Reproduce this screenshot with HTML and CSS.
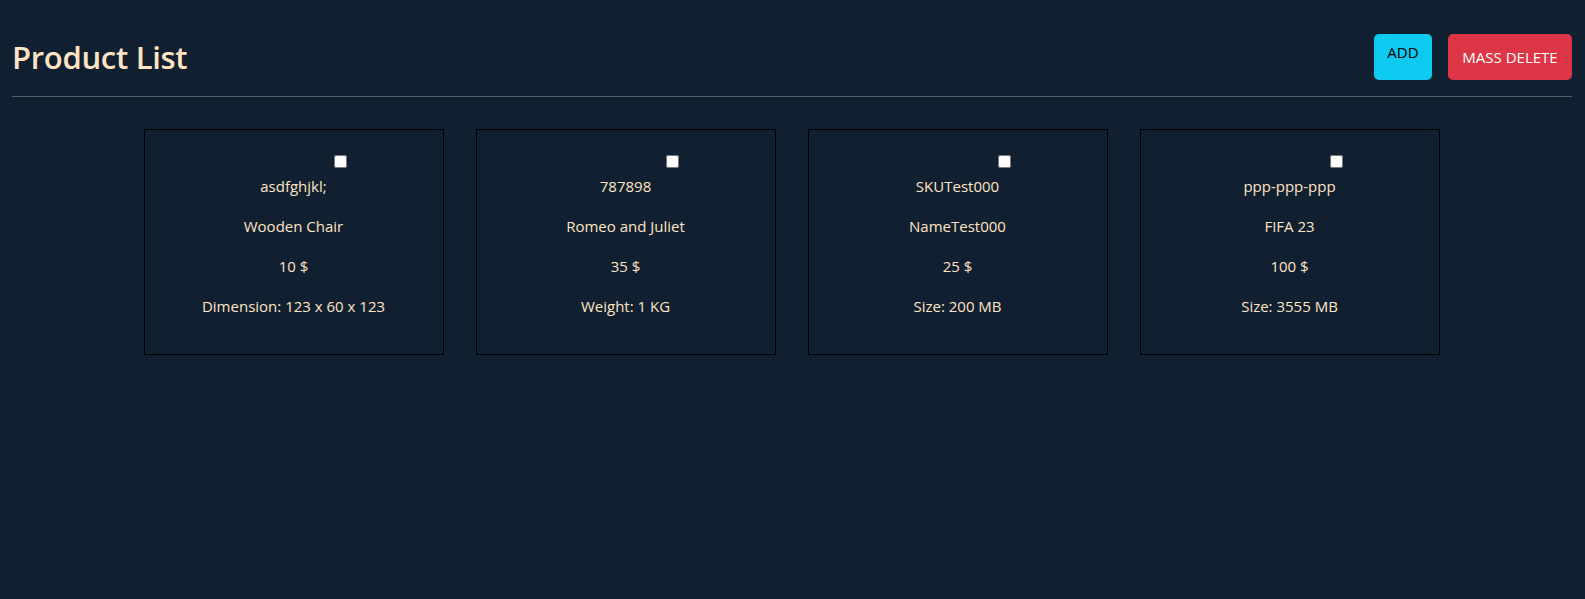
FILE: index.html
```html
<!DOCTYPE html>
<html>
<head>
<meta charset="utf-8">
<title>Product List</title>
<link rel="stylesheet" href="styles.css">
</head>
<body>
<header class="header">
  <h1 class="title">Product List</h1>
  <div class="actions">
    <button class="btn btn-add">ADD</button>
    <button class="btn btn-delete">MASS DELETE</button>
  </div>
</header>
<hr class="divider">
<main class="list">
  <div class="card">
    <div class="check-row"><input type="checkbox" class="delete-checkbox"></div>
    <p class="sku">asdfghjkl;</p>
    <p>Wooden Chair</p>
    <p>10 $</p>
    <p>Dimension: 123 x 60 x 123</p>
  </div>
  <div class="card">
    <div class="check-row"><input type="checkbox" class="delete-checkbox"></div>
    <p class="sku">787898</p>
    <p>Romeo and Juliet</p>
    <p>35 $</p>
    <p>Weight: 1 KG</p>
  </div>
  <div class="card">
    <div class="check-row"><input type="checkbox" class="delete-checkbox"></div>
    <p class="sku">SKUTest000</p>
    <p>NameTest000</p>
    <p>25 $</p>
    <p>Size: 200 MB</p>
  </div>
  <div class="card">
    <div class="check-row"><input type="checkbox" class="delete-checkbox"></div>
    <p class="sku">ppp-ppp-ppp</p>
    <p>FIFA 23</p>
    <p>100 $</p>
    <p>Size: 3555 MB</p>
  </div>
</main>
</body>
</html>
```

FILE: styles.css
```css
* { box-sizing: border-box; }

html, body {
  margin: 0;
  padding: 0;
  background: #112031;
  height: 100%;
}

body {
  font-family: "Open Sans", "Noto Sans", sans-serif;
  color: #ffe4c4;
  font-size: 15px;
}

.header {
  display: flex;
  align-items: center;
  justify-content: space-between;
  height: 96px;
  padding: 18px 13px 0 12px;
}

.title {
  margin: 0;
  font-size: 31px;
  font-weight: 600;
  letter-spacing: -0.3px;
  color: #ffe4c4;
  line-height: 40px;
}

.actions {
  display: flex;
  gap: 16px;
}

.btn {
  border: none;
  border-radius: 5px;
  height: 46px;
  font-family: "Open Sans", "Noto Sans", sans-serif;
  font-size: 15px;
  cursor: pointer;
}

.btn-add {
  width: 58px;
  background: #0dcaf0;
  color: #000;
  padding: 0 0 10px;
}

.btn-delete {
  width: 124px;
  background: #dc3545;
  color: #fff;
  padding: 0;
}

.divider {
  margin: 0 13px 0 12px;
  border: none;
  border-top: 1px solid #555d66;
  height: 0;
}

.list {
  display: flex;
  justify-content: center;
  gap: 32px;
  margin-top: 32px;
  padding-right: 2px;
}

.card {
  width: 300px;
  height: 226px;
  border: 1px solid #000;
  padding: 25px 8px 0;
  text-align: center;
}

.check-row {
  height: 13px;
  line-height: 0;
}

.delete-checkbox {
  width: 13px;
  height: 13px;
  margin: 0 0 0 93px;
}

.card p {
  margin: 16px 0;
  line-height: 24px;
}

.card p.sku {
  margin-top: 6px;
}
```
